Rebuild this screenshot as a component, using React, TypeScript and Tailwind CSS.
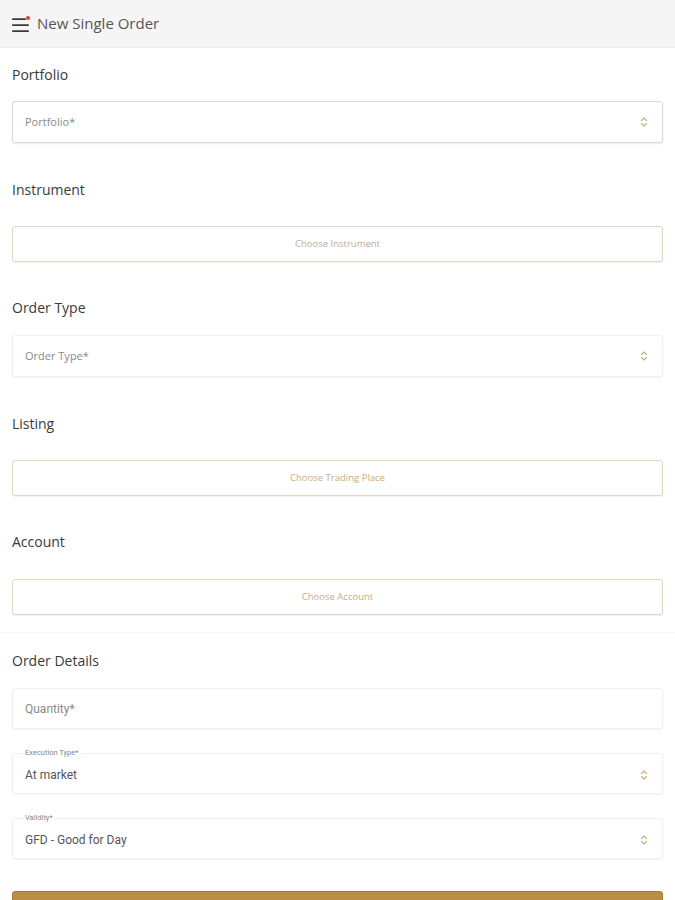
import React from 'react';

const labelFont = { fontFamily: '"Open Sans", "Liberation Sans", sans-serif' };
const fieldFont = { fontFamily: 'Roboto, "Liberation Sans", sans-serif' };

function Chevrons() {
  return (
    <svg width="8" height="12" viewBox="0 0 8 12" fill="none" className="shrink-0">
      <path d="M1.5 4.5 L4 2 L6.5 4.5" stroke="#c9b07a" strokeWidth="1.1" strokeLinecap="round" strokeLinejoin="round" />
      <path d="M1.5 7.5 L4 10 L6.5 7.5" stroke="#c9b07a" strokeWidth="1.1" strokeLinecap="round" strokeLinejoin="round" />
    </svg>
  );
}

function MenuIcon() {
  return (
    <svg width="20" height="18" viewBox="0 0 20 18" fill="none">
      <rect x="1" y="3.3" width="14" height="1.8" rx="0.9" fill="#3a3a3a" />
      <rect x="1" y="9.3" width="17" height="1.8" rx="0.9" fill="#3a3a3a" />
      <rect x="1" y="15.3" width="17" height="1.8" rx="0.9" fill="#3a3a3a" />
      <circle cx="17" cy="3" r="2" fill="#e53935" />
    </svg>
  );
}

function SectionLabel({ children }: { children: React.ReactNode }) {
  return (
    <div className="h-5 text-[14px] leading-5 text-[#3a3a3a]" style={labelFont}>
      {children}
    </div>
  );
}

function SelectBox({ placeholder, strong }: { placeholder: string; strong?: boolean }) {
  return (
    <div
      className={
        'h-[42px] flex items-center justify-between px-3 pr-[14px] bg-white rounded-[3px] border ' +
        (strong ? 'border-[#d9d9d9] shadow-[0_1px_2px_rgba(0,0,0,0.08)]' : 'border-[#f0f0f0] shadow-[0_1px_2px_rgba(0,0,0,0.05)]')
      }
    >
      <span className="text-[11px] text-[#8a8a8a]" style={labelFont}>{placeholder}</span>
      <Chevrons />
    </div>
  );
}

function ChooseButton({ text }: { text: string }) {
  return (
    <div className="h-9 flex items-center justify-center bg-white rounded-[3px] border border-[#e3d6c2] shadow-[0_1px_1px_rgba(160,130,80,0.12)]">
      <span className="text-[9.5px] text-[#c4ad88]" style={labelFont}>{text}</span>
    </div>
  );
}

function OutlinedField({ label, value }: { label: string; value: string }) {
  return (
    <div className="relative h-[41px] flex items-center justify-between px-3 pr-[14px] pt-[2px] bg-white rounded-[3px] border border-[#f0f0f0] shadow-[0_1px_2px_rgba(0,0,0,0.05)]">
      <span
        className="absolute left-[10px] -top-[6px] px-[2px] bg-white text-[7.5px] leading-[10px] text-[#888]"
        style={fieldFont}
      >
        {label}
      </span>
      <span className="text-[12px] text-[#555]" style={fieldFont}>
        {value}
      </span>
      <Chevrons />
    </div>
  );
}

export default function App() {
  return (
    <div className="w-[675px] h-[900px] overflow-hidden bg-white">
      <header className="h-12 bg-[#f5f5f5] flex items-center gap-[6px] pl-[11px] border-b border-[#ededed]">
        <MenuIcon />
        <span className="text-[15px] text-[#555]" style={labelFont}>New Single Order</span>
      </header>

      <div className="px-3">
        <section className="pt-[17px] pb-[37px]">
          <SectionLabel>Portfolio</SectionLabel>
          <div className="mt-4">
            <SelectBox placeholder="Portfolio*" strong />
          </div>
        </section>

        <section className="pb-9">
          <SectionLabel>Instrument</SectionLabel>
          <div className="mt-[26px]">
            <ChooseButton text="Choose Instrument" />
          </div>
        </section>

        <section className="pb-[37px]">
          <SectionLabel>Order Type</SectionLabel>
          <div className="mt-[17px]">
            <SelectBox placeholder="Order Type*" />
          </div>
        </section>

        <section className="pb-9">
          <SectionLabel>Listing</SectionLabel>
          <div className="mt-[26px]">
            <ChooseButton text="Choose Trading Place" />
          </div>
        </section>

        <section className="pb-[17px]">
          <SectionLabel>Account</SectionLabel>
          <div className="mt-[27px]">
            <ChooseButton text="Choose Account" />
          </div>
        </section>
      </div>

      <div className="border-t border-[#f8f8f8] px-3 pt-[18px]">
        <SectionLabel>Order Details</SectionLabel>
        <div className="mt-[17px] flex flex-col gap-6">
          <div className="h-[41px] flex items-center px-3 bg-white rounded-[3px] border border-[#f0f0f0] shadow-[0_1px_2px_rgba(0,0,0,0.05)]">
            <span className="text-[12px] text-[#888]" style={fieldFont}>
              Quantity*
            </span>
          </div>
          <OutlinedField label="Execution Type*" value="At market" />
          <OutlinedField label="Validity*" value="GFD - Good for Day" />
        </div>
        <div className="mt-8 h-10 rounded-[3px] bg-[#b98f45] border border-[#a67c35]" />
      </div>
    </div>
  );
}
